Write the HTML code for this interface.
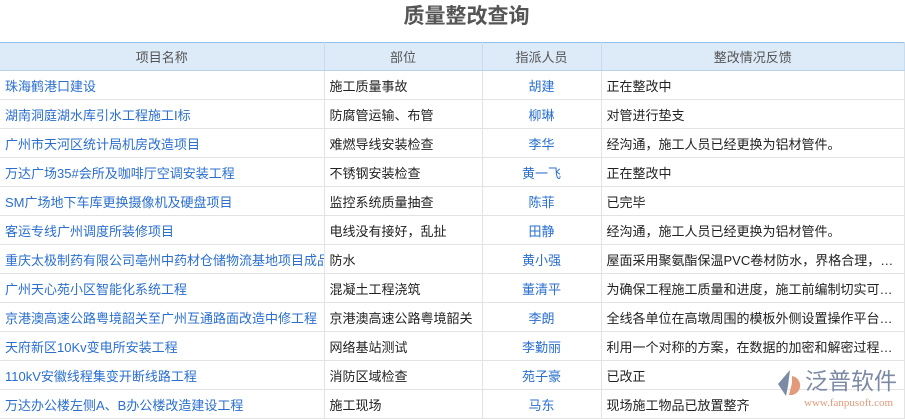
<!DOCTYPE html><html><head><meta charset="utf-8"><style>
body{margin:0;width:905px;height:414px;overflow:hidden;background:#fff;font-family:"Liberation Sans","Noto Sans CJK SC",sans-serif;font-size:13px;color:#222;position:relative}
h1{margin:0;position:absolute;top:2px;left:0;width:933px;text-align:center;font-size:21px;font-weight:bold;color:#555;line-height:30px}
table{position:absolute;top:42px;left:0;border-collapse:collapse;width:905px;table-layout:fixed}
th{background:#ddeaf8;color:#555;font-weight:normal;height:27px;padding:0;border-top:1px solid #8fc1ec;border-bottom:1px solid #b8d3ee;border-right:1px solid #c8dcef}
td{height:28px;padding:0 5px;border-bottom:1px solid #e3e3e3;border-right:1px solid #e3e3e3;white-space:nowrap;overflow:hidden;text-overflow:ellipsis}
td:nth-child(1){color:#2a6fd0;text-overflow:clip}td:nth-child(3){color:#2a6fd0;text-align:center}
.logo{position:absolute;left:772px;top:364px;width:134px;height:50px;white-space:nowrap}
</style></head><body>
<h1>质量整改查询</h1>
<table><colgroup><col style="width:324px"><col style="width:158px"><col style="width:119px"><col></colgroup>
<tr><th>项目名称</th><th>部位</th><th>指派人员</th><th>整改情况反馈</th></tr>
<tr><td>珠海鹤港口建设</td><td>施工质量事故</td><td>胡建</td><td>正在整改中</td></tr>
<tr><td>湖南洞庭湖水库引水工程施工I标</td><td>防腐管运输、布管</td><td>柳琳</td><td>对管进行垫支</td></tr>
<tr><td>广州市天河区统计局机房改造项目</td><td>难燃导线安装检查</td><td>李华</td><td>经沟通，施工人员已经更换为铝材管件。</td></tr>
<tr><td>万达广场35#会所及咖啡厅空调安装工程</td><td>不锈钢安装检查</td><td>黄一飞</td><td>正在整改中</td></tr>
<tr><td>SM广场地下车库更换摄像机及硬盘项目</td><td>监控系统质量抽查</td><td>陈菲</td><td>已完毕</td></tr>
<tr><td>客运专线广州调度所装修项目</td><td>电线没有接好，乱扯</td><td>田静</td><td>经沟通，施工人员已经更换为铝材管件。</td></tr>
<tr><td>重庆太极制药有限公司亳州中药材仓储物流基地项目成品</td><td>防水</td><td>黄小强</td><td>屋面采用聚氨酯保温PVC卷材防水，界格合理，美观大方</td></tr>
<tr><td>广州天心苑小区智能化系统工程</td><td>混凝土工程浇筑</td><td>董清平</td><td>为确保工程施工质量和进度，施工前编制切实可行的方案</td></tr>
<tr><td>京港澳高速公路粤境韶关至广州互通路面改造中修工程</td><td>京港澳高速公路粤境韶关</td><td>李朗</td><td>全线各单位在高墩周围的模板外侧设置操作平台和安全网</td></tr>
<tr><td>天府新区10Kv变电所安装工程</td><td>网络基站测试</td><td>李勤丽</td><td>利用一个对称的方案，在数据的加密和解密过程中进行处理</td></tr>
<tr><td>110kV安徽线程集变开断线路工程</td><td>消防区域检查</td><td>苑子豪</td><td>已改正</td></tr>
<tr><td>万达办公楼左侧A、B办公楼改造建设工程</td><td>施工现场</td><td>马东</td><td>现场施工物品已放置整齐</td></tr>
</table>
<div class="logo"><svg width="30" height="30" viewBox="0 0 30 30" style="position:absolute;left:2px;top:4px"><path d="M16 2 L4 16 L12 28 L14 18 Z" fill="#7d8aa6"/><path d="M18 8 A9 9 0 1 1 15 27 L18 15 Z" fill="#e29a7a"/></svg>
<div style="position:absolute;left:33px;top:3px;font-size:23px;color:#7d8aa6;line-height:28px">泛普软件</div>
<div style="position:absolute;left:32px;top:33px;font-size:11px;color:#e29a7a;font-family:'Liberation Serif',serif">www.fanpusoft.com</div></div>
</body></html>
